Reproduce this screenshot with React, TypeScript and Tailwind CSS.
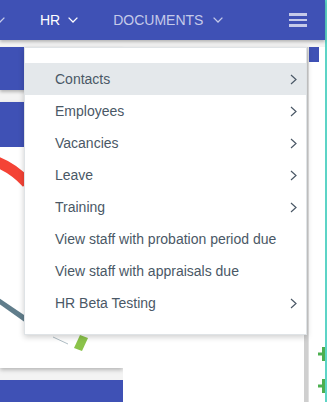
import React from 'react';

/* ── Content ─────────────────────────────────────────────── */

type MenuItem = { label: string; sub?: boolean; active?: boolean };

const MENU: MenuItem[] = [
  { label: 'Contacts', sub: true, active: true },
  { label: 'Employees', sub: true },
  { label: 'Vacancies', sub: true },
  { label: 'Leave', sub: true },
  { label: 'Training', sub: true },
  { label: 'View staff with probation period due' },
  { label: 'View staff with appraisals due' },
  { label: 'HR Beta Testing', sub: true },
];

/* ── Small drawings ──────────────────────────────────────── */

function ChevronDown({ className = '' }: { className?: string }) {
  return (
    <svg width="10" height="6" viewBox="0 0 10 6" className={className} aria-hidden>
      <polyline points="0.6,0.6 5,5 9.4,0.6" fill="none" stroke="currentColor" strokeWidth="1.3" />
    </svg>
  );
}

function ChevronRight() {
  return (
    <svg width="7" height="11" viewBox="0 0 7 11" className="text-[#4a5866]" aria-hidden>
      <polyline points="1,1 6,5.5 1,10" fill="none" stroke="currentColor" strokeWidth="1.2" />
    </svg>
  );
}

function Hamburger() {
  return (
    <div className="flex w-[18px] flex-col gap-[3px]">
      <span className="h-[2.5px] bg-[#c5cae9]" />
      <span className="h-[2.5px] bg-[#c5cae9]" />
      <span className="h-[2.5px] bg-[#c5cae9]" />
    </div>
  );
}

function Plus() {
  return (
    <svg width="10" height="14" viewBox="0 0 10 14" aria-hidden>
      <rect x="0" y="5.5" width="10" height="3" fill="#4caf50" />
      <rect x="4" y="0" width="3" height="14" fill="#4caf50" />
    </svg>
  );
}

function Gauge() {
  return (
    <svg width="123" height="221" viewBox="0 0 123 221" aria-hidden>
      <path d="M-6 14 Q12 20 27 36" fill="none" stroke="#f44336" strokeWidth="11" />
      <polygon points="-4,149 -2,156 26,176 27,170" fill="#607d8b" />
      <line x1="53" y1="190" x2="68" y2="197" stroke="#b0bec5" strokeWidth="1" />
      <polygon points="80,188 88,191 82,204 74,201" fill="#8bc34a" />
    </svg>
  );
}

/* ── Page ────────────────────────────────────────────────── */

export default function App() {
  return (
    <div className="relative flex h-[402px] w-[327px] overflow-hidden bg-white font-['Liberation_Sans',Arial,sans-serif]">
      <div className="flex flex-1 flex-col">
        {/* top bar */}
        <header className="relative z-10 flex h-[40px] shrink-0 items-center bg-[#3f51b5] text-[14px] shadow-[0_2px_3px_rgba(0,0,0,0.25)]">
          <ChevronDown className="ml-[-5px] text-[#c5cae9]" />
          <span className="ml-[35px] text-white">HR</span>
          <ChevronDown className="ml-[8px] text-white" />
          <span className="ml-[35px] text-[#c5cae9]">DOCUMENTS</span>
          <ChevronDown className="ml-[10px] text-[#c5cae9]" />
          <div className="ml-auto mr-[18px]">
            <Hamburger />
          </div>
        </header>

        {/* dashboard behind the menu */}
        <div className="flex flex-1 bg-[#f3f3f3] pt-[7px]">
          <div className="flex w-[123px] flex-col">
            <div className="h-[43px] bg-[#3f51b5] shadow-[0_2px_3px_rgba(0,0,0,0.25)]" />
            <div className="mt-[12px] flex flex-col shadow-[0_2px_4px_rgba(0,0,0,0.25)]">
              <div className="h-[45px] bg-[#3f51b5]" />
              <div className="h-[221px] bg-white">
                <Gauge />
              </div>
            </div>
            <div className="mt-[12px] flex-1 bg-[#3f51b5]" />
          </div>

          <div className="flex flex-1 bg-white">
            <div className="flex-1" />
            <div className="w-[4px] bg-[#cfcfcf]" />
            <div className="flex w-[17px] flex-col overflow-hidden border-l border-[#e0e0e0]">
              <div className="h-[15px] w-[10px] bg-[#3f51b5]" />
              <div className="ml-[9px] mt-[285px]">
                <Plus />
              </div>
              <div className="ml-[9px] mt-[18px]">
                <Plus />
              </div>
            </div>
          </div>
        </div>
      </div>

      <div className="w-[2px] shrink-0 bg-[#5cd4c6]" />

      {/* HR dropdown */}
      <div className="absolute left-[24px] top-[47px] z-20 w-[283px] border border-[#dfe3e6] bg-white py-[15px] shadow-[0_2px_6px_rgba(0,0,0,0.2)]">
        {MENU.map((item) => (
          <div
            key={item.label}
            className={`flex h-[32px] items-center justify-between pl-[30px] pr-[9px] text-[14px] text-[#4a5866] ${
              item.active ? 'bg-[#e4e8eb]' : ''
            }`}
          >
            <span>{item.label}</span>
            {item.sub && <ChevronRight />}
          </div>
        ))}
      </div>
    </div>
  );
}
